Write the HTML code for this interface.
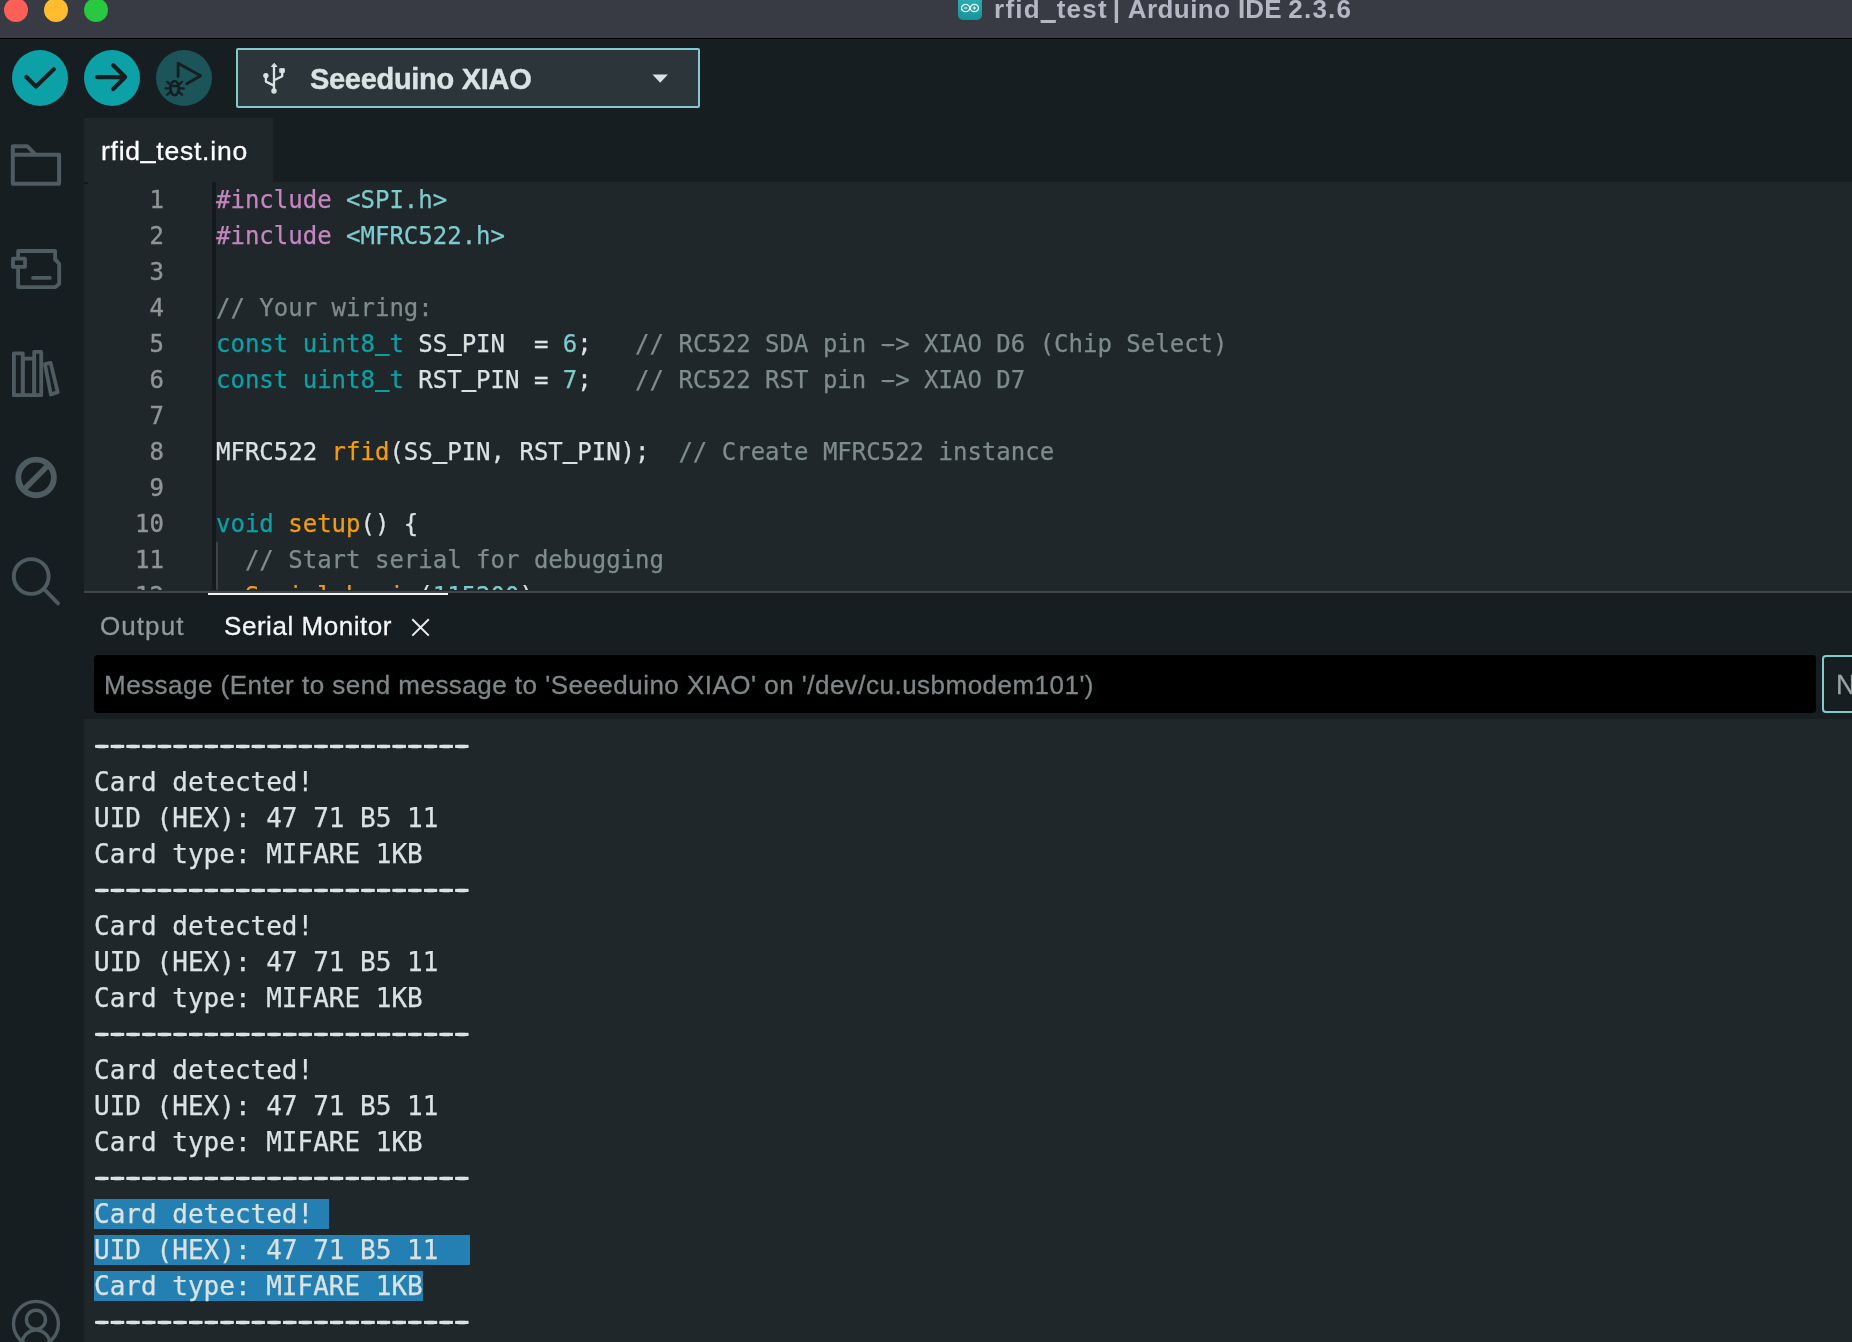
<!DOCTYPE html>
<html lang="en">
<head>
<meta charset="utf-8">
<title>rfid_test | Arduino IDE 2.3.6</title>
<style>
*{box-sizing:border-box;margin:0;padding:0}
html,body{width:1852px;height:1342px;overflow:hidden;background:#171e21}
body{position:relative;font-family:"Liberation Sans",sans-serif;color:#dae3e3}
.abs{position:absolute}
.ol,.cl,.ln,#title,#boardname,#tabname,#tOutput,#tSerial,#placeholder,#lineendtxt{will-change:transform}
#titlebar{left:0;top:0;width:1852px;height:38px;background:#383a44}
#titleline{left:0;top:38px;width:1852px;height:1px;background:#000;box-shadow:0 1px 0 rgba(0,0,0,.25)}
.tl{width:24px;height:24px;border-radius:50%;top:-2px}
#title{left:994px;top:-7px;font-weight:bold;font-size:26px;letter-spacing:.66px;line-height:32px;color:#b6b6c4;white-space:nowrap}
#appicon{left:958px;top:-6px;width:24px;height:26px;border-radius:5px;background:linear-gradient(#2fb4b9,#15949a)}
#sidebar{left:0;top:39px;width:84px;height:1303px;background:#171e21}
#toolbar{left:0;top:39px;width:1852px;height:79px;background:#171e21}
.tbtn{width:56px;height:56px;border-radius:50%;top:50px;background:#0ca1a6}
#board{left:236px;top:48px;width:464px;height:60px;border:2px solid #7fcbcd;border-radius:2px;background:#2c353a}
#boardname{left:309.5px;top:61.5px;font-weight:bold;font-size:29px;line-height:34px;color:#dae3e3;white-space:nowrap;letter-spacing:-.3px;-webkit-text-stroke:.4px #dae3e3}
#tab{left:84px;top:118px;width:189px;height:65px;background:#1f272a}
#tabname{left:100.5px;top:135px;font-size:26.5px;line-height:32px;color:#fff;white-space:nowrap;letter-spacing:.76px;-webkit-text-stroke:.3px #fff}
#editor{left:84px;top:182px;width:1768px;height:408px;background:#1f272a;overflow:hidden}
#gutterline{left:128px;top:0;width:4px;height:410px;background:#141a1d}
#guide{left:132px;top:360px;width:2px;height:60px;background:#404446}
.ln{position:absolute;left:0;width:80px;text-align:right;font-family:"DejaVu Sans Mono",monospace;font-size:24px;line-height:36px;color:#8f9595;height:36px}
.cl{position:absolute;left:132px;font-family:"DejaVu Sans Mono",monospace;font-size:24px;line-height:36px;height:36px;white-space:pre;color:#dae3e3}
.pp{color:#c586c0}.st{color:#7fcbcd}.cm{color:#7f8c8d}.kw{color:#0ca1a6}.fn{color:#f39c12}.nu{color:#7fcbcd}
#panelborder{left:84px;top:590px;width:1768px;height:3px;background:#3f4446;border-top:1px solid #222a2d}
#panelhead{left:84px;top:593px;width:1768px;height:126px;background:#171e21}
#activetab{left:208px;top:593px;width:240px;height:2px;background:#f2f5f5}
#tOutput{left:100px;top:609.4px;font-size:26px;line-height:34px;color:#8f9a9b;white-space:nowrap;letter-spacing:1.07px;-webkit-text-stroke:.3px #8f9a9b}
#tSerial{left:224px;top:609.4px;font-size:26px;line-height:34px;color:#f4f7f7;white-space:nowrap;letter-spacing:.54px;-webkit-text-stroke:.3px #f4f7f7}
#input{left:94px;top:655px;width:1722px;height:58px;background:#000;border-radius:4px}
#placeholder{left:104px;top:668px;font-size:26px;line-height:34px;color:#7e8889;white-space:nowrap;letter-spacing:.48px;-webkit-text-stroke:.3px #7e8889}
#lineend{left:1822px;top:655px;width:40px;height:58px;border:2px solid #7fcbcd;border-radius:4px;background:#171e21}
#lineendtxt{left:1836px;top:668px;font-size:27px;line-height:34px;color:#9aa5a6;-webkit-text-stroke:.3px #9aa5a6}
#output{left:84px;top:719px;width:1768px;height:623px;background:#1f272a;overflow:hidden}
.ol{position:absolute;left:10px;margin-top:1px;font-family:"DejaVu Sans Mono",monospace;font-size:26px;line-height:36px;height:36px;white-space:pre;color:#dae3e3}
.us{position:relative;top:-2px;text-shadow:0 -.8px 0 currentColor,0 -1.5px 0 currentColor}
.us2{text-shadow:0 -.5px 0 currentColor,0 .5px 0 currentColor,0 1px 0 currentColor,0 1.5px 0 currentColor}
.cl{-webkit-text-stroke:.25px currentColor}
.ln{-webkit-text-stroke:.4px currentColor}
.ol{-webkit-text-stroke:.25px currentColor}
.dash{margin-top:-.3px;text-shadow:-3.3px 0 0 currentColor,3.3px 0 0 currentColor,-3.3px -.9px 0 currentColor,0 -.9px 0 currentColor,3.3px -.9px 0 currentColor}
.hy{text-shadow:-3.2px 0 0 currentColor,3.2px 0 0 currentColor,-1.6px 0 0 currentColor,1.6px 0 0 currentColor}
.us3{position:relative;top:-2.2px;text-shadow:0 -.5px 0 currentColor}
.sel{background:#2480b3;display:inline-block;height:30px;line-height:30px;vertical-align:top;margin-top:3px}
</style>
</head>
<body>
<div id="titlebar" class="abs"></div>
<div id="titleline" class="abs"></div>
<div class="abs tl" style="left:4px;background:#fe5f57"></div>
<div class="abs tl" style="left:44px;background:#febc2e"></div>
<div class="abs tl" style="left:84px;background:#28c840"></div>
<div id="appicon" class="abs"></div>
<div id="title" class="abs"><span id="w1" style="letter-spacing:1.26px">rfid<span class="us2">_</span>test</span><span id="w2" style="margin-left:-3px"> | </span><span id="w3" style="letter-spacing:.46px;margin-left:-1px">Arduino</span><span id="w4" style="letter-spacing:.2px"> IDE</span><span id="w5" style="letter-spacing:1.2px;margin-left:-2px"> 2.3.6</span></div>

<div id="toolbar" class="abs"></div>
<div id="sidebar" class="abs"></div>
<div class="abs tbtn" style="left:12px"></div>
<div class="abs tbtn" style="left:84px"></div>
<div class="abs tbtn" style="left:156px;background:#1b5459"></div>
<div id="board" class="abs"></div>
<div id="boardname" class="abs">Seeeduino XIAO</div>

<div id="tab" class="abs"></div>
<div id="tabname" class="abs">rfid<span class="us3">_</span>test.ino</div>

<div id="editor" class="abs">
<div id="gutterline" class="abs"></div><div class="abs" style="left:0;top:0;width:4px;height:2px;background:#12181a"></div>
<div id="guide" class="abs"></div>
<div class="ln" style="top:0">1</div><div class="cl" style="top:0"><span class="pp">#include</span> <span class="st">&lt;SPI.h&gt;</span></div>
<div class="ln" style="top:36px">2</div><div class="cl" style="top:36px"><span class="pp">#include</span> <span class="st">&lt;MFRC522.h&gt;</span></div>
<div class="ln" style="top:72px">3</div>
<div class="ln" style="top:108px">4</div><div class="cl" style="top:108px"><span class="cm">// Your wiring:</span></div>
<div class="ln" style="top:144px">5</div><div class="cl" style="top:144px"><span class="kw">const</span> <span class="kw">uint8<span class="us">_</span>t</span> SS<span class="us">_</span>PIN  = <span class="nu">6</span>;   <span class="cm">// RC522 SDA pin <span class="hy">-</span>&gt; XIAO D6 (Chip Select)</span></div>
<div class="ln" style="top:180px">6</div><div class="cl" style="top:180px"><span class="kw">const</span> <span class="kw">uint8<span class="us">_</span>t</span> RST<span class="us">_</span>PIN = <span class="nu">7</span>;   <span class="cm">// RC522 RST pin <span class="hy">-</span>&gt; XIAO D7</span></div>
<div class="ln" style="top:216px">7</div>
<div class="ln" style="top:252px">8</div><div class="cl" style="top:252px">MFRC522 <span class="fn">rfid</span>(SS<span class="us">_</span>PIN, RST<span class="us">_</span>PIN);  <span class="cm">// Create MFRC522 instance</span></div>
<div class="ln" style="top:288px">9</div>
<div class="ln" style="top:324px">10</div><div class="cl" style="top:324px"><span class="kw">void</span> <span class="fn">setup</span>() {</div>
<div class="ln" style="top:360px">11</div><div class="cl" style="top:360px">  <span class="cm">// Start serial for debugging</span></div>
<div class="ln" style="top:396px">12</div><div class="cl" style="top:396px">  <span class="fn">Serial</span>.<span class="fn">begin</span>(<span class="nu">115200</span>);</div>
</div>

<div id="panelborder" class="abs"></div>
<div id="panelhead" class="abs"></div>
<div id="activetab" class="abs"></div>
<div id="tOutput" class="abs">Output</div>
<div id="tSerial" class="abs">Serial Monitor</div>
<div id="input" class="abs"></div>
<div id="placeholder" class="abs">Message (Enter to send message to 'Seeeduino XIAO' on '/dev/cu.usbmodem101')</div>
<div id="lineend" class="abs"></div>
<div id="lineendtxt" class="abs">N</div>

<div id="output" class="abs">
<div class="ol dash" style="top:8px">------------------------</div>
<div class="ol" style="top:44px">Card detected!</div>
<div class="ol" style="top:80px">UID (HEX): 47 71 B5 11</div>
<div class="ol" style="top:116px">Card type: MIFARE 1KB</div>
<div class="ol dash" style="top:152px">------------------------</div>
<div class="ol" style="top:188px">Card detected!</div>
<div class="ol" style="top:224px">UID (HEX): 47 71 B5 11</div>
<div class="ol" style="top:260px">Card type: MIFARE 1KB</div>
<div class="ol dash" style="top:296px">------------------------</div>
<div class="ol" style="top:332px">Card detected!</div>
<div class="ol" style="top:368px">UID (HEX): 47 71 B5 11</div>
<div class="ol" style="top:404px">Card type: MIFARE 1KB</div>
<div class="ol dash" style="top:440px">------------------------</div>
<div class="ol" style="top:476px"><span class="sel">Card detected! </span></div>
<div class="ol" style="top:512px"><span class="sel">UID (HEX): 47 71 B5 11  </span></div>
<div class="ol" style="top:548px"><span class="sel">Card type: MIFARE 1KB</span></div>
<div class="ol dash" style="top:584px">------------------------</div>
</div>

<svg class="abs" style="left:0;top:0" width="1852" height="1342" viewBox="0 0 1852 1342" fill="none">
<!-- app icon glyph -->
<g stroke="#f2fbfb" stroke-width="1.35" fill="none"><ellipse cx="965.6" cy="8" rx="4.1" ry="3.6"/><ellipse cx="974.4" cy="8" rx="4.1" ry="3.6"/></g>
<path d="M964 8h3.2M972.8 8h3.2M974.4 6.4v3.2" stroke="#fff" stroke-width="1"/>
<!-- verify -->
<path d="M26.3 77L35.9 86.5L53.8 69.2" stroke="#171e21" stroke-width="4.2" stroke-linecap="round" stroke-linejoin="round"/>
<!-- upload -->
<path d="M97.1 77.1H124.6M113.2 65.2L125.2 77.1L113.2 89" stroke="#171e21" stroke-width="4.2" stroke-linecap="round" stroke-linejoin="round"/>
<!-- debug -->
<g stroke="#171e21" stroke-width="2.8" stroke-linecap="round" stroke-linejoin="round">
<path d="M178.1 76.6V63.2L200.6 75.8L186.8 83.7"/>
<ellipse cx="174.6" cy="88.1" rx="4.2" ry="7.1" stroke-width="2.6"/>
<path d="M170.6 86h8M165.6 88.4h4.6M179 88.4h4.6M167.2 81.9l3 2.6M182 81.9l-3 2.6M167.2 94.7l3-2.5M182 94.7l-3-2.5" stroke-width="2.4"/>
</g>
<!-- usb -->
<g fill="#dae3e3" stroke="#dae3e3" stroke-width="2.3" stroke-linecap="round" stroke-linejoin="round">
<path d="M274 66V90.5M265.9 76V81.6L274 85.6M282.2 72V76.2L274 80.2" fill="none"/>
<path d="M274 63.6L271.4 66.5H276.6Z" stroke-width="1"/>
<circle cx="274" cy="91" r="2.1" stroke-width="1.2"/>
<circle cx="265.9" cy="75.6" r="2.1" stroke-width="1.2"/>
<rect x="280.1" y="68.7" width="4.2" height="3.7" stroke-width="1"/>
</g>
<!-- caret -->
<path d="M652.5 74.6H667.9L660.2 82.8Z" fill="#dae3e3"/>
<!-- sidebar icons -->
<g stroke="#4e5b61" stroke-width="4" stroke-linejoin="round" stroke-linecap="round">
<path d="M12.8 146.2H27.2L35.6 154.7H59.1V183.7H12.8ZM12.8 154.7H35.6"/>
<g stroke-width="3.8">
<path d="M18.1 256.7V251H55.1V259.4L59.2 263.8V283.8L55.4 287.1H18.1V268.7"/>
<rect x="13" y="258.6" width="12" height="8.2"/>
<path d="M33 277.9H49.8"/>
<rect x="13.9" y="353.4" width="8.9" height="41.8"/>
<rect x="22.8" y="358.7" width="11.4" height="36.5"/>
<rect x="34.2" y="351.9" width="7" height="43.3"/>
<path d="M44.9 364L50.6 362.9L57.7 392.1L50.9 394.5Z"/>
</g>
<circle cx="36.1" cy="477.4" r="17.8" stroke-width="5.9"/>
<path d="M23.8 489.8L48.4 465" stroke-width="5.6" stroke-linecap="butt"/>
<circle cx="31.2" cy="576.5" r="17.4" stroke-width="3.9"/>
<path d="M44 589L58 603.4" stroke-width="3.9"/>
<g stroke-width="3.4">
<circle cx="35.95" cy="1323.85" r="22.45"/>
<circle cx="35.95" cy="1319.7" r="9.5"/>
<path d="M22.1 1342A14 14 0 0 1 49.8 1342"/>
</g>
</g>
<!-- close x -->
<path d="M412.3 619.2L428.8 635.6M428.8 619.2L412.3 635.6" stroke="#e8eded" stroke-width="2"/>
</svg>
</body>
</html>
